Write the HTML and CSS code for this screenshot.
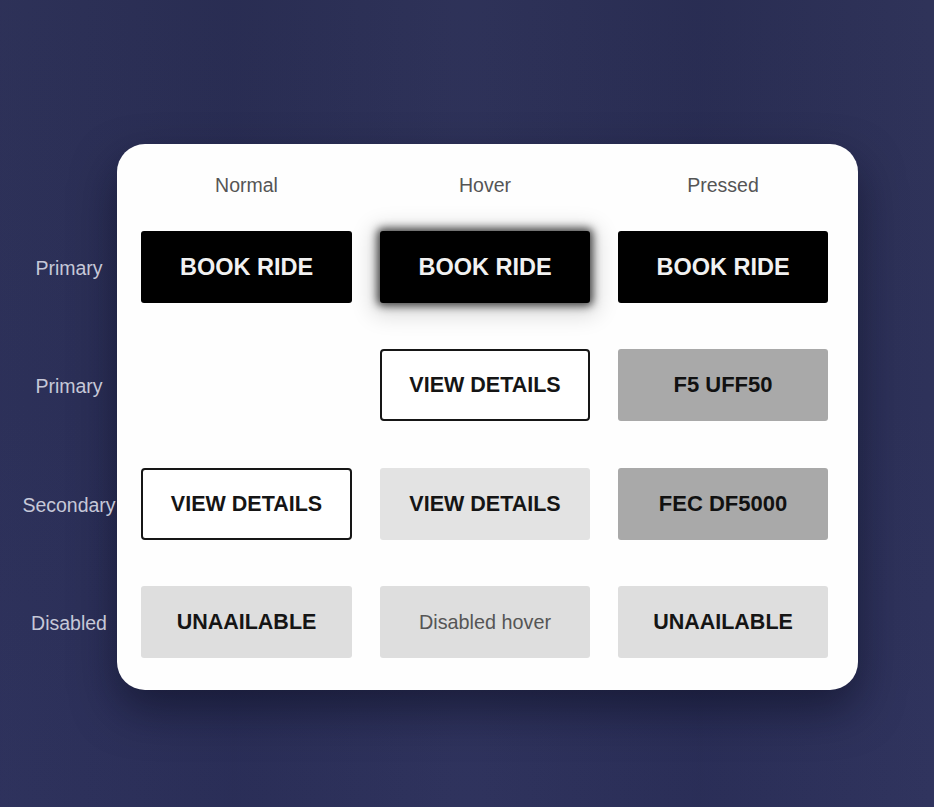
FILE: index.html
```html
<!DOCTYPE html>
<html lang="en">
<head>
<meta charset="utf-8">
<title>Button states</title>
<link rel="stylesheet" href="styles.css">
</head>
<body>
<main class="board">
  <div class="card"></div>

  <div class="col-head c1">Normal</div>
  <div class="col-head c2">Hover</div>
  <div class="col-head c3">Pressed</div>

  <div class="row-label r1">Primary</div>
  <button class="btn solid c1 r1 big">BOOK RIDE</button>
  <button class="btn solid lifted c2 r1 big">BOOK RIDE</button>
  <button class="btn solid c3 r1 big">BOOK RIDE</button>

  <div class="row-label r2">Primary</div>
  <button class="btn outline c2 r2 narrow">VIEW DETAILS</button>
  <button class="btn pressed c3 r2">F5 UFF50</button>

  <div class="row-label r3">Secondary</div>
  <button class="btn outline c1 r3 narrow">VIEW DETAILS</button>
  <button class="btn light c2 r3 narrow">VIEW DETAILS</button>
  <button class="btn pressed c3 r3">FEC DF5000</button>

  <div class="row-label r4">Disabled</div>
  <button class="btn muted c1 r4 narrow">UNAAILABLE</button>
  <button class="btn muted soft c2 r4">Disabled hover</button>
  <button class="btn muted c3 r4 narrow">UNAAILABLE</button>
</main>
</body>
</html>
```

FILE: styles.css
```css
html, body {
  margin: 0;
  padding: 0;
  height: 100%;
}

body {
  background:
    linear-gradient(90deg, rgba(255,255,255,0.01) 0%, rgba(0,0,0,0.04) 25%, rgba(255,255,255,0.015) 50%, rgba(0,0,0,0.04) 75%, rgba(255,255,255,0.02) 100%),
    linear-gradient(180deg, #2b2f56 0%, #2a2e57 50%, #2c305b 100%);
  font-family: "Liberation Sans", Arial, Helvetica, sans-serif;
  overflow: hidden;
}

.board {
  display: grid;
  grid-template-columns: 113px 211px 210px 210px;
  grid-template-rows: 87px 118px 119px 118px 104px;
  column-gap: 28px;
  padding-top: 144px;
}

.card {
  grid-column: 2 / 5;
  grid-row: 1 / -1;
  margin: 0 -30px 0 -24px;
  background: #fefefe;
  border-radius: 28px;
  box-shadow: 0 20px 44px rgba(8, 10, 28, 0.5);
}

.c1 { grid-column: 2; }
.c2 { grid-column: 3; }
.c3 { grid-column: 4; }
.r1 { grid-row: 2; }
.r2 { grid-row: 3; }
.r3 { grid-row: 4; }
.r4 { grid-row: 5; }

.col-head {
  grid-row: 1;
  padding-top: 30px;
  line-height: 22px;
  font-size: 19.5px;
  color: #555;
  text-align: center;
  z-index: 1;
}

.row-label {
  grid-column: 1;
  height: 72px;
  display: flex;
  align-items: center;
  justify-content: center;
  padding-left: 25px;
  padding-top: 2px;
  box-sizing: border-box;
  font-size: 19.5px;
  color: #c6c8d8;
  white-space: nowrap;
  z-index: 2;
}

.btn {
  height: 72px;
  align-self: start;
  margin: 0;
  padding: 0;
  border: none;
  border-radius: 3px;
  font-family: "Liberation Sans", Arial, Helvetica, sans-serif;
  font-weight: 700;
  font-size: 22px;
  color: #151515;
  z-index: 1;
  cursor: pointer;
}

.btn.big { font-size: 23.5px; }
.btn.narrow { font-size: 21.5px; }

.solid {
  background: #000;
  color: #f1f1f1;
}

.lifted {
  box-shadow: 0 0 9px 3px rgba(0, 0, 0, 0.7), 0 4px 22px 8px rgba(0, 0, 0, 0.15);
}

.outline {
  background: #fff;
  border: 2px solid #161616;
  border-radius: 4px;
}

.pressed {
  background: #a9a9a9;
  color: #111;
}

.light {
  background: #e3e3e3;
}

.muted {
  background: #dedede;
  color: #151515;
}

.soft {
  font-weight: 400;
  font-size: 19.8px;
  color: #555;
}
```
